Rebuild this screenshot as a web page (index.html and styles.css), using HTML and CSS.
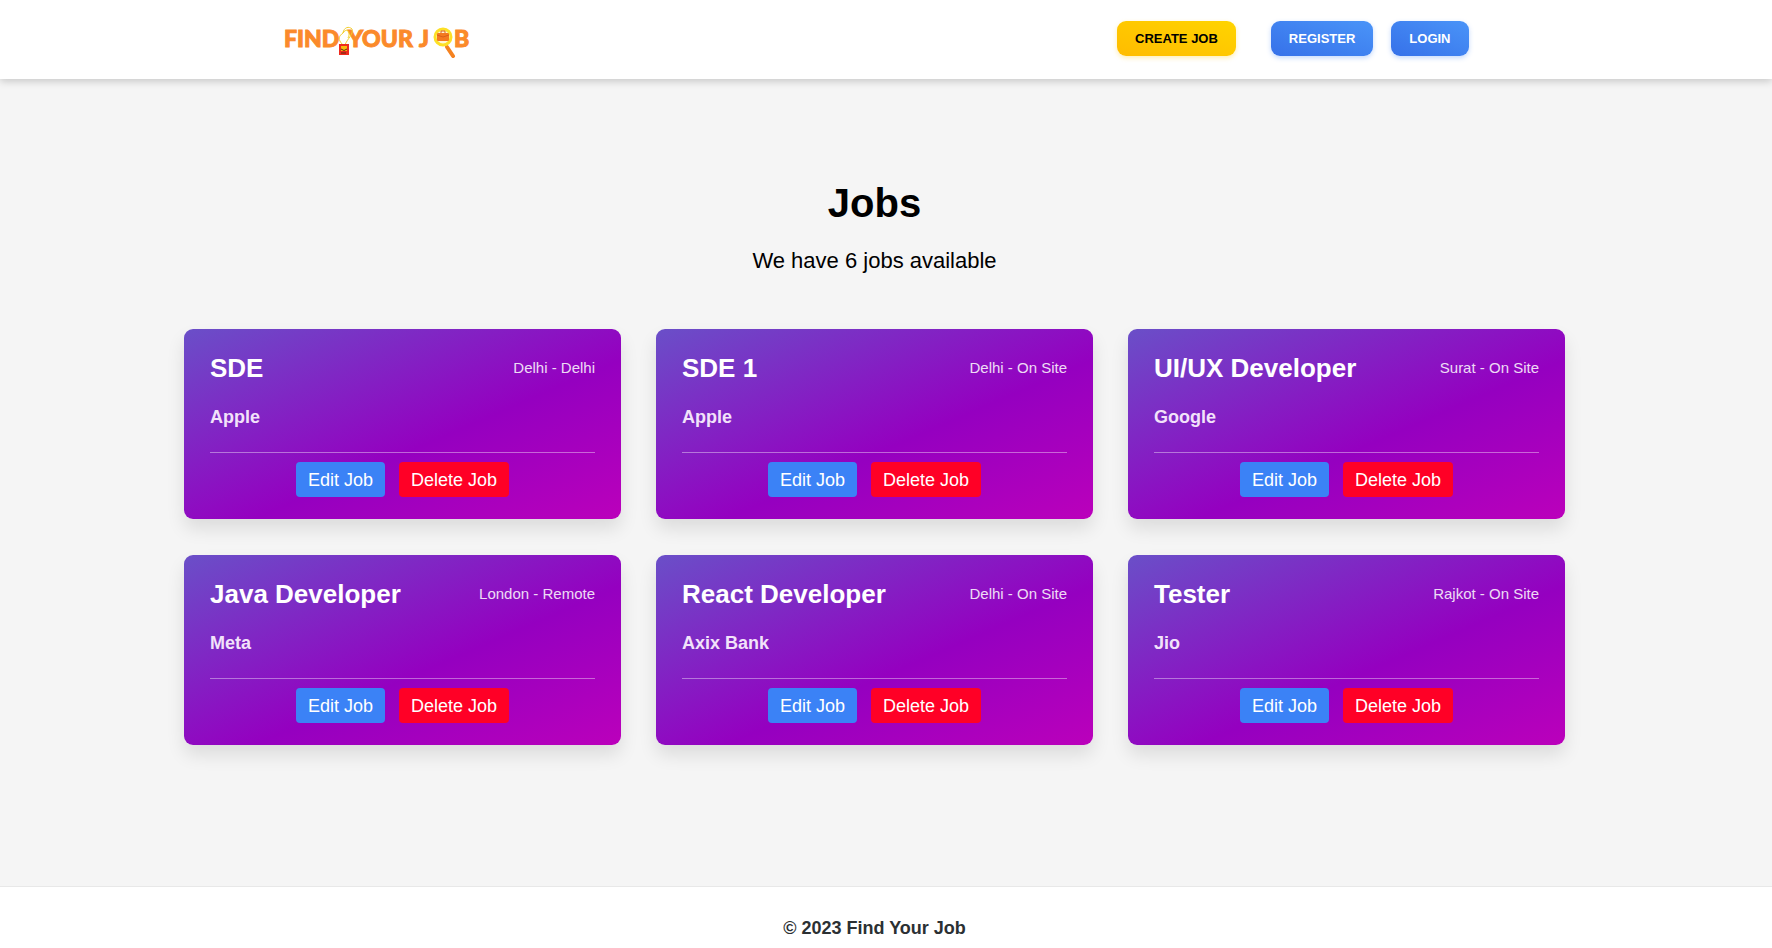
FILE: index.html
```html
<!DOCTYPE html>
<html lang="en">
<head>
<meta charset="utf-8">
<title>Find Your Job</title>
<link rel="stylesheet" href="styles.css">
</head>
<body>
<header class="site-header">
  <nav class="nav">
    <a class="logo" href="#" aria-label="Find Your Job">
      <svg width="196" height="40" viewBox="0 0 196 40">
        <g class="logo-text">
          <text x="3" y="29">FIND</text>
          <text x="67" y="29">YOUR</text>
          <text x="138" y="29">J</text>
          <text x="173" y="29">B</text>
        </g>
        <path d="M62 27C56 21 58 18 62 15C63 9 68 8 71 11C73 16 66 21 64 27M62 15C66 9 70 14 67 20" fill="none" stroke="#f2cf2c"/>
        <rect x="58" y="26" width="10" height="11" fill="#ef2a1d"/>
        <rect x="60" y="28" width="6" height="5" fill="#f9b90e"/>
        <path d="M60 31q3 3 6 0M60 35h5" stroke="#5c2a10" fill="none"/>
        <path d="M166 29l6 9" stroke="#f58220" stroke-width="4" stroke-linecap="round"/>
        <circle cx="162" cy="19" r="8" fill="#fff6d8" stroke="#fde026" stroke-width="3"/>
        <rect x="156" y="15" width="12" height="8" rx="1" fill="#f47a20"/>
        <path d="M160 15v-2h4v2M156 17l6 2 6-2" fill="none" stroke="#d9601a"/>
      </svg>
    </a>
    <div class="nav-actions">
      <a class="nav-button nav-create" href="#">CREATE JOB</a>
      <div class="nav-account">
        <a class="nav-button" href="#">REGISTER</a>
        <a class="nav-button" href="#">LOGIN</a>
      </div>
    </div>
  </nav>
</header>
<main class="main">
  <h1 class="heading">Jobs</h1>
  <p class="summary">We have 6 jobs available</p>
  <div class="jobs">
    <article class="job">
      <div class="job-top"><h2 class="job-title">SDE</h2><span class="job-place">Delhi - Delhi</span></div>
      <p class="job-company">Apple</p>
      <div class="job-actions"><button class="button edit">Edit Job</button><button class="button delete">Delete Job</button></div>
    </article>
    <article class="job">
      <div class="job-top"><h2 class="job-title">SDE 1</h2><span class="job-place">Delhi - On Site</span></div>
      <p class="job-company">Apple</p>
      <div class="job-actions"><button class="button edit">Edit Job</button><button class="button delete">Delete Job</button></div>
    </article>
    <article class="job">
      <div class="job-top"><h2 class="job-title">UI/UX Developer</h2><span class="job-place">Surat - On Site</span></div>
      <p class="job-company">Google</p>
      <div class="job-actions"><button class="button edit">Edit Job</button><button class="button delete">Delete Job</button></div>
    </article>
    <article class="job">
      <div class="job-top"><h2 class="job-title">Java Developer</h2><span class="job-place">London - Remote</span></div>
      <p class="job-company">Meta</p>
      <div class="job-actions"><button class="button edit">Edit Job</button><button class="button delete">Delete Job</button></div>
    </article>
    <article class="job">
      <div class="job-top"><h2 class="job-title">React Developer</h2><span class="job-place">Delhi - On Site</span></div>
      <p class="job-company">Axix Bank</p>
      <div class="job-actions"><button class="button edit">Edit Job</button><button class="button delete">Delete Job</button></div>
    </article>
    <article class="job">
      <div class="job-top"><h2 class="job-title">Tester</h2><span class="job-place">Rajkot - On Site</span></div>
      <p class="job-company">Jio</p>
      <div class="job-actions"><button class="button edit">Edit Job</button><button class="button delete">Delete Job</button></div>
    </article>
  </div>
</main>
<footer class="footer">© 2023 Find Your Job</footer>
</body>
</html>
```
FILE: styles.css
```css
* {
  box-sizing: border-box;
}

body {
  margin: 0;
  min-height: 100vh;
  display: flex;
  flex-direction: column;
  background: #f5f5f5;
  color: #000;
  font: 18px/22px "Liberation Sans", Arial, sans-serif;
}

h1, h2, p {
  margin: 0;
}

.site-header,
.main,
.footer {
  padding-right: 23px;
}

.site-header {
  background: #fff;
  box-shadow: 0 2px 8px rgba(0, 0, 0, 0.2);
}

.nav {
  display: flex;
  align-items: center;
  justify-content: space-between;
  max-width: 1188px;
  margin: 0 auto;
  padding: 18px 0 21px;
}

.logo {
  display: flex;
}

.logo-text {
  fill: #fb8a2a;
  stroke: #fb8a2a;
  font: 900 23px Lato, sans-serif;
}

.nav-actions {
  display: flex;
  gap: 35px;
}

.nav-account {
  display: flex;
  gap: 18px;
}

.nav-button {
  padding: 9px 18px 8px;
  border-radius: 9px;
  background: linear-gradient(to top right, #3671e9, #4a94f8);
  box-shadow: 0 2px 5px rgba(59, 130, 246, 0.3);
  color: #fff;
  font-size: 13px;
  line-height: 18px;
  font-weight: 700;
  text-decoration: none;
}

.nav-create {
  background: linear-gradient(to top right, #ffbc00, #ffd400);
  box-shadow: 0 2px 5px rgba(255, 200, 0, 0.3);
  color: #000;
}

.main {
  flex: 1;
  padding-top: 102px;
  padding-bottom: 141px;
}

.heading {
  font-size: 40px;
  line-height: 44px;
  text-align: center;
}

.summary {
  margin-top: 23px;
  font-size: 22px;
  line-height: 26px;
  text-align: center;
}

.jobs {
  display: grid;
  grid-template-columns: repeat(3, 1fr);
  gap: 36px 35px;
  max-width: 1381px;
  margin: 55px auto 0;
}

.job {
  padding: 26px 26px 22px;
  border-radius: 9px;
  background: linear-gradient(to bottom right, #6a4fc8, #9500c0 58%, #bb00bb);
  box-shadow: 0 10px 18px rgba(0, 0, 0, 0.1);
  color: #fff;
}

.job-top {
  display: flex;
  align-items: center;
  justify-content: space-between;
}

.job-title {
  font-size: 26px;
  line-height: 26px;
}

.job-place {
  font-size: 15px;
  line-height: 18px;
  opacity: 0.85;
}

.job-company {
  margin: 25px 0 24px;
  font-weight: 700;
  color: #f2e2fa;
}

.job-actions {
  display: flex;
  justify-content: center;
  gap: 14px;
  padding-top: 9px;
  border-top: 1px solid rgba(255, 255, 255, 0.4);
}

.button {
  padding: 7px 12px 6px;
  border: 0;
  border-radius: 4px;
  color: #fff;
  font: inherit;
  cursor: pointer;
}

.edit {
  background: #3b82f6;
}

.delete {
  background: #ff0026;
}

.footer {
  padding-top: 30px;
  padding-bottom: 9px;
  border-top: 1px solid #e8e8e8;
  background: #fff;
  color: #2b3033;
  font-weight: 700;
  text-align: center;
}
```
